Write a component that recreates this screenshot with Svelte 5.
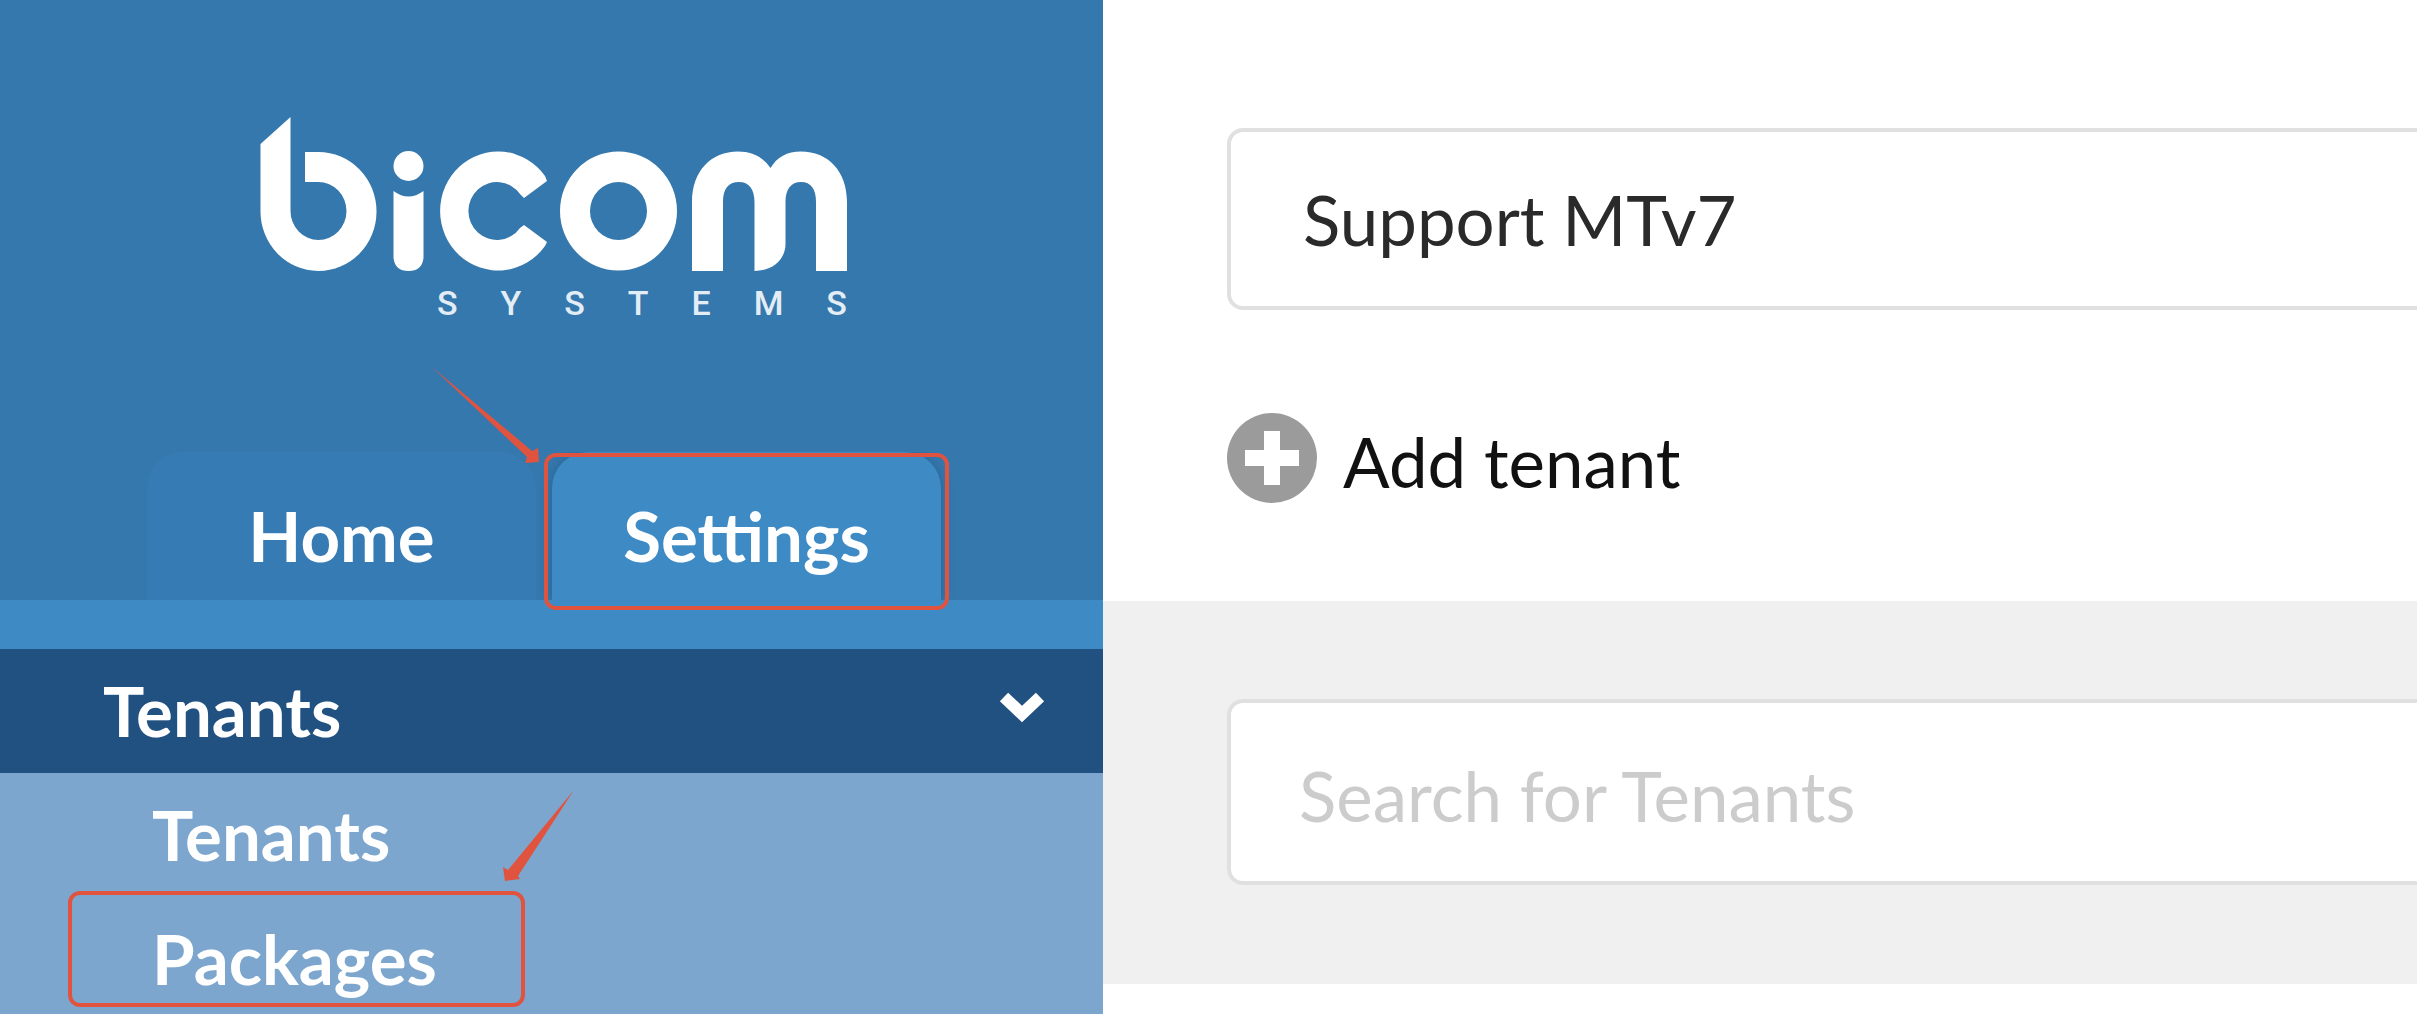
<script>
  let tenant = $state('Support MTv7');
  let query = $state('');
  let open = $state(true);
  const letters = [...'SYSTEMS'];
</script>

<div class="page">
  <aside class="sidebar">
    <div class="brand">
      <svg class="logo" viewBox="260 117 587 154" role="img" aria-label="bicom">
        <g fill="#fff">
          <path d="M290.500 117V211A28 29 0 1 0 318.500 182H305V152H318.500A58 59.500 0 1 1 260.500 211V144Z" />
          <circle cx="408.500" cy="166" r="15" />
          <path d="M393.500 191Q408.500 202 423.500 191V258Q422 271 408.500 271Q395 271 393.500 258Z" />
          <path d="M545 176L547 181L524 198L520 194A28.500 29 0 1 0 520 228L524 225L547 242L545 246A58 59.500 0 1 1 545 176Z" />
          <path fill-rule="evenodd" d="M618.500 151.500A58.500 59.500 0 1 1 618.500 270.500A58.500 59.500 0 1 1 618.500 151.500ZM618.500 182A28.500 29 0 1 0 618.500 240A28.500 29 0 1 0 618.500 182Z" />
          <path d="M692 271V202C692 171 711 151.500 738 151.500C752 151.500 763 157 770.500 168C777 157 787 151.500 801 151.500C828 151.500 847 171 847 202V271H816V202C816 189 811 182 801 182C791 182 785.500 189 785.500 202V244C785.500 259 773 271 754.500 271V202C754.500 189 749 182 739 182C728 182 723 189 723 202V271Z" />
        </g>
      </svg>
      <div class="systems">
        {#each letters as letter}<span>{letter}</span>{/each}
      </div>
    </div>

    <nav class="tabs" aria-label="Sections">
      <a class="tab" href="#home">Home</a>
      <a class="tab active" href="#settings">
        Settings
        <svg class="arrow to-settings" viewBox="0 0 108 96" aria-hidden="true">
          <path d="M0 0L100 84L106 81L107 95L93 96L95 90Z" />
        </svg>
      </a>
    </nav>

    <div class="menu">
      <button class="group" aria-expanded={open} onclick={() => (open = !open)}>
        Tenants
        <svg class="chevron" viewBox="0 0 46 38" aria-hidden="true">
          <path d="M5 5L23 22L41 5" fill="none" stroke="#fff" stroke-width="12" />
        </svg>
      </button>
      {#if open}
        <a class="item" href="#tenants">Tenants</a>
        <a class="item marked" href="#packages">
          Packages
          <svg class="arrow to-packages" viewBox="0 0 72 92" aria-hidden="true">
            <path d="M71 0L15 86L17 89L2 91L0 77L5 80Z" />
          </svg>
        </a>
      {/if}
    </div>
  </aside>

  <main>
    <section class="top">
      <input class="field" type="text" aria-label="Tenant" bind:value={tenant} />
      <button class="add">
        <svg viewBox="0 0 90 90" aria-hidden="true">
          <circle cx="45" cy="45" r="45" fill="#9b9b9b" />
          <path d="M45 18V72M18 45H72" stroke="#fff" stroke-width="16" />
        </svg>
        Add tenant
      </button>
    </section>
    <section class="search">
      <input class="field" type="text" aria-label="Search for Tenants" placeholder="Search for Tenants" bind:value={query} />
    </section>
  </main>
</div>

<style>
  :global(body) {
    background: #fff;
  }
  .page {
    display: grid;
    grid-template-columns: 1103px minmax(0, 1fr);
    height: 100vh;
    overflow: hidden;
    font: 69px/82px Lato, Carlito, sans-serif;
    color: #fff;
  }
  .page *,
  .page *::before,
  .page *::after {
    box-sizing: border-box;
  }
  a {
    color: inherit;
    text-decoration: none;
  }
  button {
    font: inherit;
    border: 0;
    background: none;
    text-align: left;
    cursor: pointer;
  }
  .sidebar {
    background: #3578ad;
    overflow: hidden;
  }
  .brand {
    padding: 117px 256px 0 260px;
  }
  .logo {
    display: block;
    width: 100%;
    overflow: visible;
  }
  .systems {
    display: flex;
    justify-content: space-between;
    margin-top: 20px;
    padding-left: 177px;
    font: 500 34px/24px Roboto, sans-serif;
    color: #e3edf5;
  }
  .tabs {
    display: flex;
    gap: 16px;
    margin-top: 137px;
    padding: 0 162px 0 147px;
    border-bottom: 49px solid #3d8ac4;
  }
  .tab {
    flex: 1;
    padding: 43px 0 23px;
    border-radius: 36px 36px 0 0;
    background: #367bb3;
    font-weight: 700;
    text-align: center;
  }
  .active {
    position: relative;
    isolation: isolate;
    background: none;
  }
  .active::before {
    content: '';
    position: absolute;
    inset: 0;
    z-index: -1;
    border-radius: 36px 36px 0 0;
    background: #3d8ac4;
    box-shadow: 0 0 12px rgba(20, 60, 100, 0.35);
    clip-path: inset(0 -16px);
  }
  .active::after,
  .marked::after {
    content: '';
    position: absolute;
    border: 4px solid #e0533f;
    border-radius: 12px;
  }
  .active::after {
    inset: 1px -8px -10px;
  }
  .arrow {
    position: absolute;
    fill: #e0533f;
  }
  .to-settings {
    left: -120px;
    top: -85px;
    width: 108px;
  }
  .menu {
    position: relative;
    min-height: 100vh;
    background: #7ca6cd;
    font-weight: 700;
  }
  .group,
  .item {
    display: flex;
    align-items: center;
    width: 100%;
    height: 124px;
  }
  .group {
    justify-content: space-between;
    padding: 0 58px 0 103px;
    background: #205181;
    color: #fff;
  }
  .chevron {
    width: 46px;
  }
  .item {
    padding-left: 152px;
  }
  .marked {
    position: relative;
  }
  .marked::after {
    left: 68px;
    top: -6px;
    width: 457px;
    height: 116px;
  }
  .to-packages {
    left: 503px;
    top: -107px;
    width: 72px;
  }
  main {
    overflow: hidden;
    color: #111;
  }
  .top {
    padding: 128px 0 98px 124px;
  }
  .search {
    padding: 98px 0 99px 124px;
    background: #f0f0f0;
  }
  .field {
    display: block;
    width: calc(100% + 20px);
    height: 182px;
    padding: 0 72px;
    border: 4px solid #e0e0e0;
    border-radius: 16px;
    background: #fff;
    font: inherit;
    color: #2a2a2a;
  }
  .search .field {
    height: 186px;
    padding: 6px 68px 0;
  }
  .field::placeholder {
    color: #ccc;
    opacity: 1;
  }
  .add {
    display: flex;
    align-items: flex-end;
    gap: 26px;
    margin-top: 103px;
    padding: 0;
    color: #111;
  }
  .add svg {
    width: 90px;
  }
</style>
